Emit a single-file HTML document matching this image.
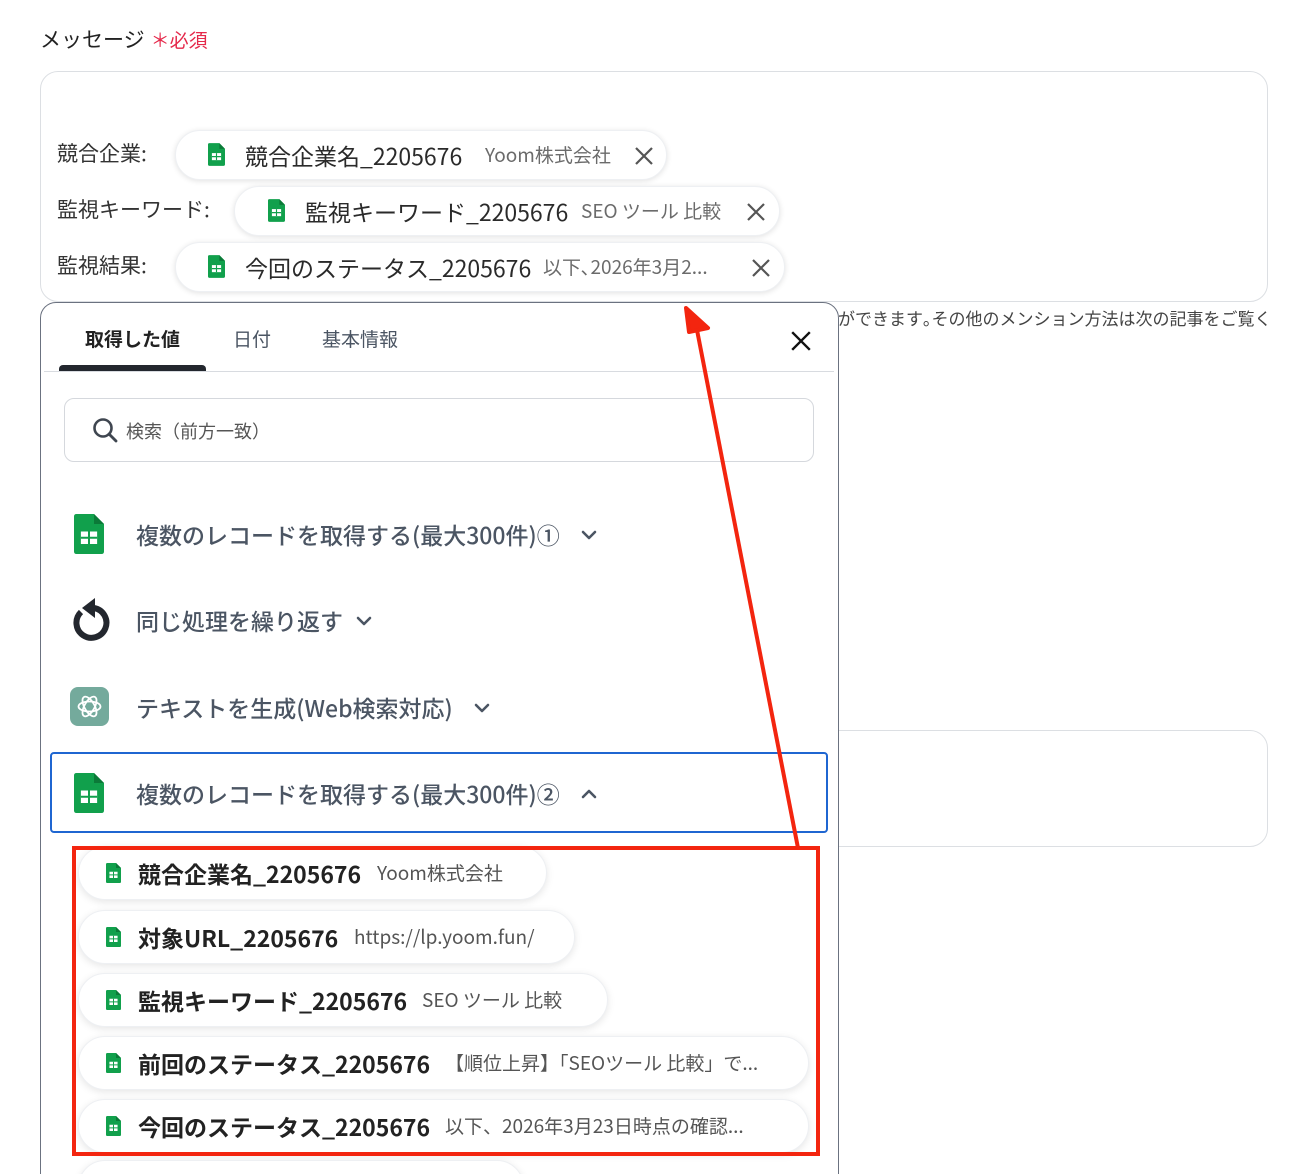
<!DOCTYPE html>
<html><head><meta charset="utf-8">
<style>
*{box-sizing:border-box;margin:0;padding:0}
html,body{width:1298px;height:1174px;overflow:hidden}
body{background:#fff;font-family:"Noto Sans CJK JP","Liberation Sans",sans-serif;position:relative;color:#333;line-height:1.2}
.a{position:absolute;white-space:nowrap}
.chip{position:absolute;height:50px;border-radius:25px;background:#fff;box-shadow:0 1px 6px rgba(0,0,0,.12);border:1px solid #eef0f3}
.ct{position:absolute;top:9px;font-size:23px;line-height:30px;color:#2a2a2a}
.cv{position:absolute;top:9px;font-size:19px;line-height:30px;color:#6b6b6b}
.lbl{position:absolute;font-size:21px;line-height:28px;color:#333}
.item{position:absolute;left:136px;font-size:23px;line-height:30px;color:#4b5563;font-weight:500}
.sc{position:absolute;left:78px;height:54px;border-radius:27px;background:#fff;box-shadow:0 2px 8px rgba(0,0,0,.1);border:1px solid #eef0f3}
.st{position:absolute;left:59px;top:11px;font-size:23px;line-height:30px;font-weight:bold;color:#222}
.sv{position:absolute;top:11px;font-size:19px;line-height:30px;color:#555}
</style></head><body>
<svg width="0" height="0" style="position:absolute">
<defs>
<symbol id="sh" viewBox="0 0 24 32"><path d="M0 2Q0 0 2 0H16L24 8V30Q24 32 22 32H2Q0 32 0 30Z" fill="#11a04c"/><path d="M16 0L24 8H16Z" fill="#0b7a38"/><rect x="5.5" y="14" width="13" height="10" fill="#fff"/><path d="M5.5 19H18.5M12 14V24" stroke="#11a04c" stroke-width="1.6"/></symbol>
<symbol id="x" viewBox="0 0 20 20"><path d="M2 2L18 18M18 2L2 18" stroke="currentColor" stroke-width="2.2" fill="none"/></symbol>
<symbol id="dn" viewBox="0 0 16 10"><path d="M2 2L8 8L14 2" stroke="#4b5563" stroke-width="2.6" fill="none" stroke-linecap="round" stroke-linejoin="round"/></symbol>
</defs></svg>

<div class="a" style="left:40px;top:24px;font-size:21px;line-height:30px;color:#222">メッセージ<span style="color:#e5294b;font-size:19px;margin-left:6px">＊必須</span></div>
<div class="a" style="left:40px;top:71px;width:1228px;height:231px;border:1px solid #dcdfe3;border-radius:18px"></div>

<div class="lbl" style="left:57px;top:139px">競合企業:</div>
<div class="chip" style="left:175px;top:130px;width:492px">
<svg class="a" style="left:32px;top:12px" width="17" height="23"><use href="#sh"/></svg>
<span class="ct" style="left:69px">競合企業名_2205676</span><span class="cv" style="left:309px">Yoom株式会社</span>
<svg class="a" style="left:458px;top:15px;color:#555" width="20" height="20"><use href="#x"/></svg></div>

<div class="lbl" style="left:57px;top:195px">監視キーワード:</div>
<div class="chip" style="left:234px;top:186px;width:546px">
<svg class="a" style="left:33px;top:12px" width="17" height="23"><use href="#sh"/></svg>
<span class="ct" style="left:70px">監視キーワード_2205676</span><span class="cv" style="left:346px">SEO ツール 比較</span>
<svg class="a" style="left:511px;top:15px;color:#555" width="20" height="20"><use href="#x"/></svg></div>

<div class="lbl" style="left:57px;top:251px">監視結果:</div>
<div class="chip" style="left:175px;top:242px;width:610px">
<svg class="a" style="left:32px;top:12px" width="17" height="23"><use href="#sh"/></svg>
<span class="ct" style="left:69px">今回のステータス_2205676</span><span class="cv" style="left:367px">以下､2026年3月2...</span>
<svg class="a" style="left:575px;top:15px;color:#555" width="20" height="20"><use href="#x"/></svg></div>

<div class="a" style="left:838px;top:306px;font-size:17px;line-height:24px;color:#444">ができます｡その他のメンション方法は次の記事をご覧く</div>
<div class="a" style="left:820px;top:730px;width:448px;height:117px;border:1px solid #dcdfe3;border-radius:18px"></div>

<div class="a" style="left:40px;top:302px;width:799px;height:900px;border:1px solid #6b7280;border-radius:16px 16px 0 0;background:#fff"></div>
<div class="a" style="left:85px;top:326px;font-size:19px;line-height:26px;font-weight:bold;color:#222">取得した値</div>
<div class="a" style="left:233px;top:326px;font-size:19px;line-height:26px;color:#4b5563">日付</div>
<div class="a" style="left:322px;top:326px;font-size:19px;line-height:26px;color:#4b5563">基本情報</div>
<div class="a" style="left:59px;top:365px;width:147px;height:6px;background:#23272e;border-radius:4px 4px 0 0"></div>
<div class="a" style="left:44px;top:371px;width:790px;height:1px;background:#d8dbe0"></div>
<svg class="a" style="left:790px;top:330px;color:#111" width="22" height="22"><use href="#x"/></svg>

<div class="a" style="left:64px;top:398px;width:750px;height:64px;border:1px solid #d5d8dd;border-radius:10px"></div>
<svg class="a" style="left:92px;top:417px" width="28" height="28" viewBox="0 0 28 28"><circle cx="11" cy="11" r="8.5" stroke="#3f4650" stroke-width="2.6" fill="none"/><path d="M17 17L24 24" stroke="#3f4650" stroke-width="2.8" stroke-linecap="round"/></svg>
<div class="a" style="left:126px;top:418px;font-size:18px;line-height:26px;color:#555">検索（前方一致）</div>

<svg class="a" style="left:74px;top:514px" width="30" height="40"><use href="#sh"/></svg>
<div class="item" style="top:519px">複数のレコードを取得する(最大300件)①</div>
<svg class="a" style="left:581px;top:530px" width="16" height="10"><use href="#dn"/></svg>

<svg class="a" style="left:68px;top:596px" width="42" height="48" viewBox="0 0 42 48"><path d="M13 16A15 15 0 1 0 26 12" stroke="#23272e" stroke-width="6" fill="none"/><path d="M27 2L27 22L14 12Z" fill="#23272e"/></svg>
<div class="item" style="top:605px">同じ処理を繰り返す</div>
<svg class="a" style="left:356px;top:616px" width="16" height="10"><use href="#dn"/></svg>

<div class="a" style="left:70px;top:687px;width:39px;height:39px;background:#74aa9c;border-radius:8px"></div>
<svg class="a" style="left:75px;top:692px" width="29" height="29" viewBox="0 0 29 29"><g stroke="#fff" stroke-width="1.8" fill="none"><ellipse cx="14.5" cy="14.5" rx="11" ry="5" /><ellipse cx="14.5" cy="14.5" rx="11" ry="5" transform="rotate(60 14.5 14.5)"/><ellipse cx="14.5" cy="14.5" rx="11" ry="5" transform="rotate(120 14.5 14.5)"/></g></svg>
<div class="item" style="top:692px">テキストを生成(Web検索対応)</div>
<svg class="a" style="left:474px;top:703px" width="16" height="10"><use href="#dn"/></svg>

<div class="a" style="left:50px;top:752px;width:778px;height:81px;border:2px solid #1f66d1;border-radius:4px"></div>
<svg class="a" style="left:74px;top:773px" width="30" height="40"><use href="#sh"/></svg>
<div class="item" style="top:778px">複数のレコードを取得する(最大300件)②</div>
<svg class="a" style="left:581px;top:789px;transform:rotate(180deg)" width="16" height="10"><use href="#dn"/></svg>

<div class="sc" style="top:846px;width:469px"><svg class="a" style="left:27px;top:14px" width="15" height="24"><use href="#sh"/></svg><span class="st">競合企業名_2205676</span><span class="sv" style="left:298px">Yoom株式会社</span></div>
<div class="sc" style="top:910px;width:497px"><svg class="a" style="left:27px;top:14px" width="15" height="24"><use href="#sh"/></svg><span class="st">対象URL_2205676</span><span class="sv" style="left:275px">https://lp.yoom.fun/</span></div>
<div class="sc" style="top:973px;width:530px"><svg class="a" style="left:27px;top:14px" width="15" height="24"><use href="#sh"/></svg><span class="st">監視キーワード_2205676</span><span class="sv" style="left:343px">SEO ツール 比較</span></div>
<div class="sc" style="top:1036px;width:731px"><svg class="a" style="left:27px;top:14px" width="15" height="24"><use href="#sh"/></svg><span class="st">前回のステータス_2205676</span><span class="sv" style="left:366px">【順位上昇】「SEOツール 比較」で...</span></div>
<div class="sc" style="top:1099px;width:731px"><svg class="a" style="left:27px;top:14px" width="15" height="24"><use href="#sh"/></svg><span class="st">今回のステータス_2205676</span><span class="sv" style="left:366px">以下、2026年3月23日時点の確認...</span></div>
<div class="sc" style="top:1160px;width:446px"></div>

<div class="a" style="left:72px;top:846px;width:748px;height:310px;border:4px solid #f3250f"></div>
<svg class="a" style="left:0;top:0" width="1298" height="1174"><path d="M798 848L697 330" stroke="#f3250f" stroke-width="4"/><path d="M686 308L708 328L689 332Z" fill="#f3250f" stroke="#f3250f" stroke-width="4" stroke-linejoin="round"/></svg>
</body></html>
